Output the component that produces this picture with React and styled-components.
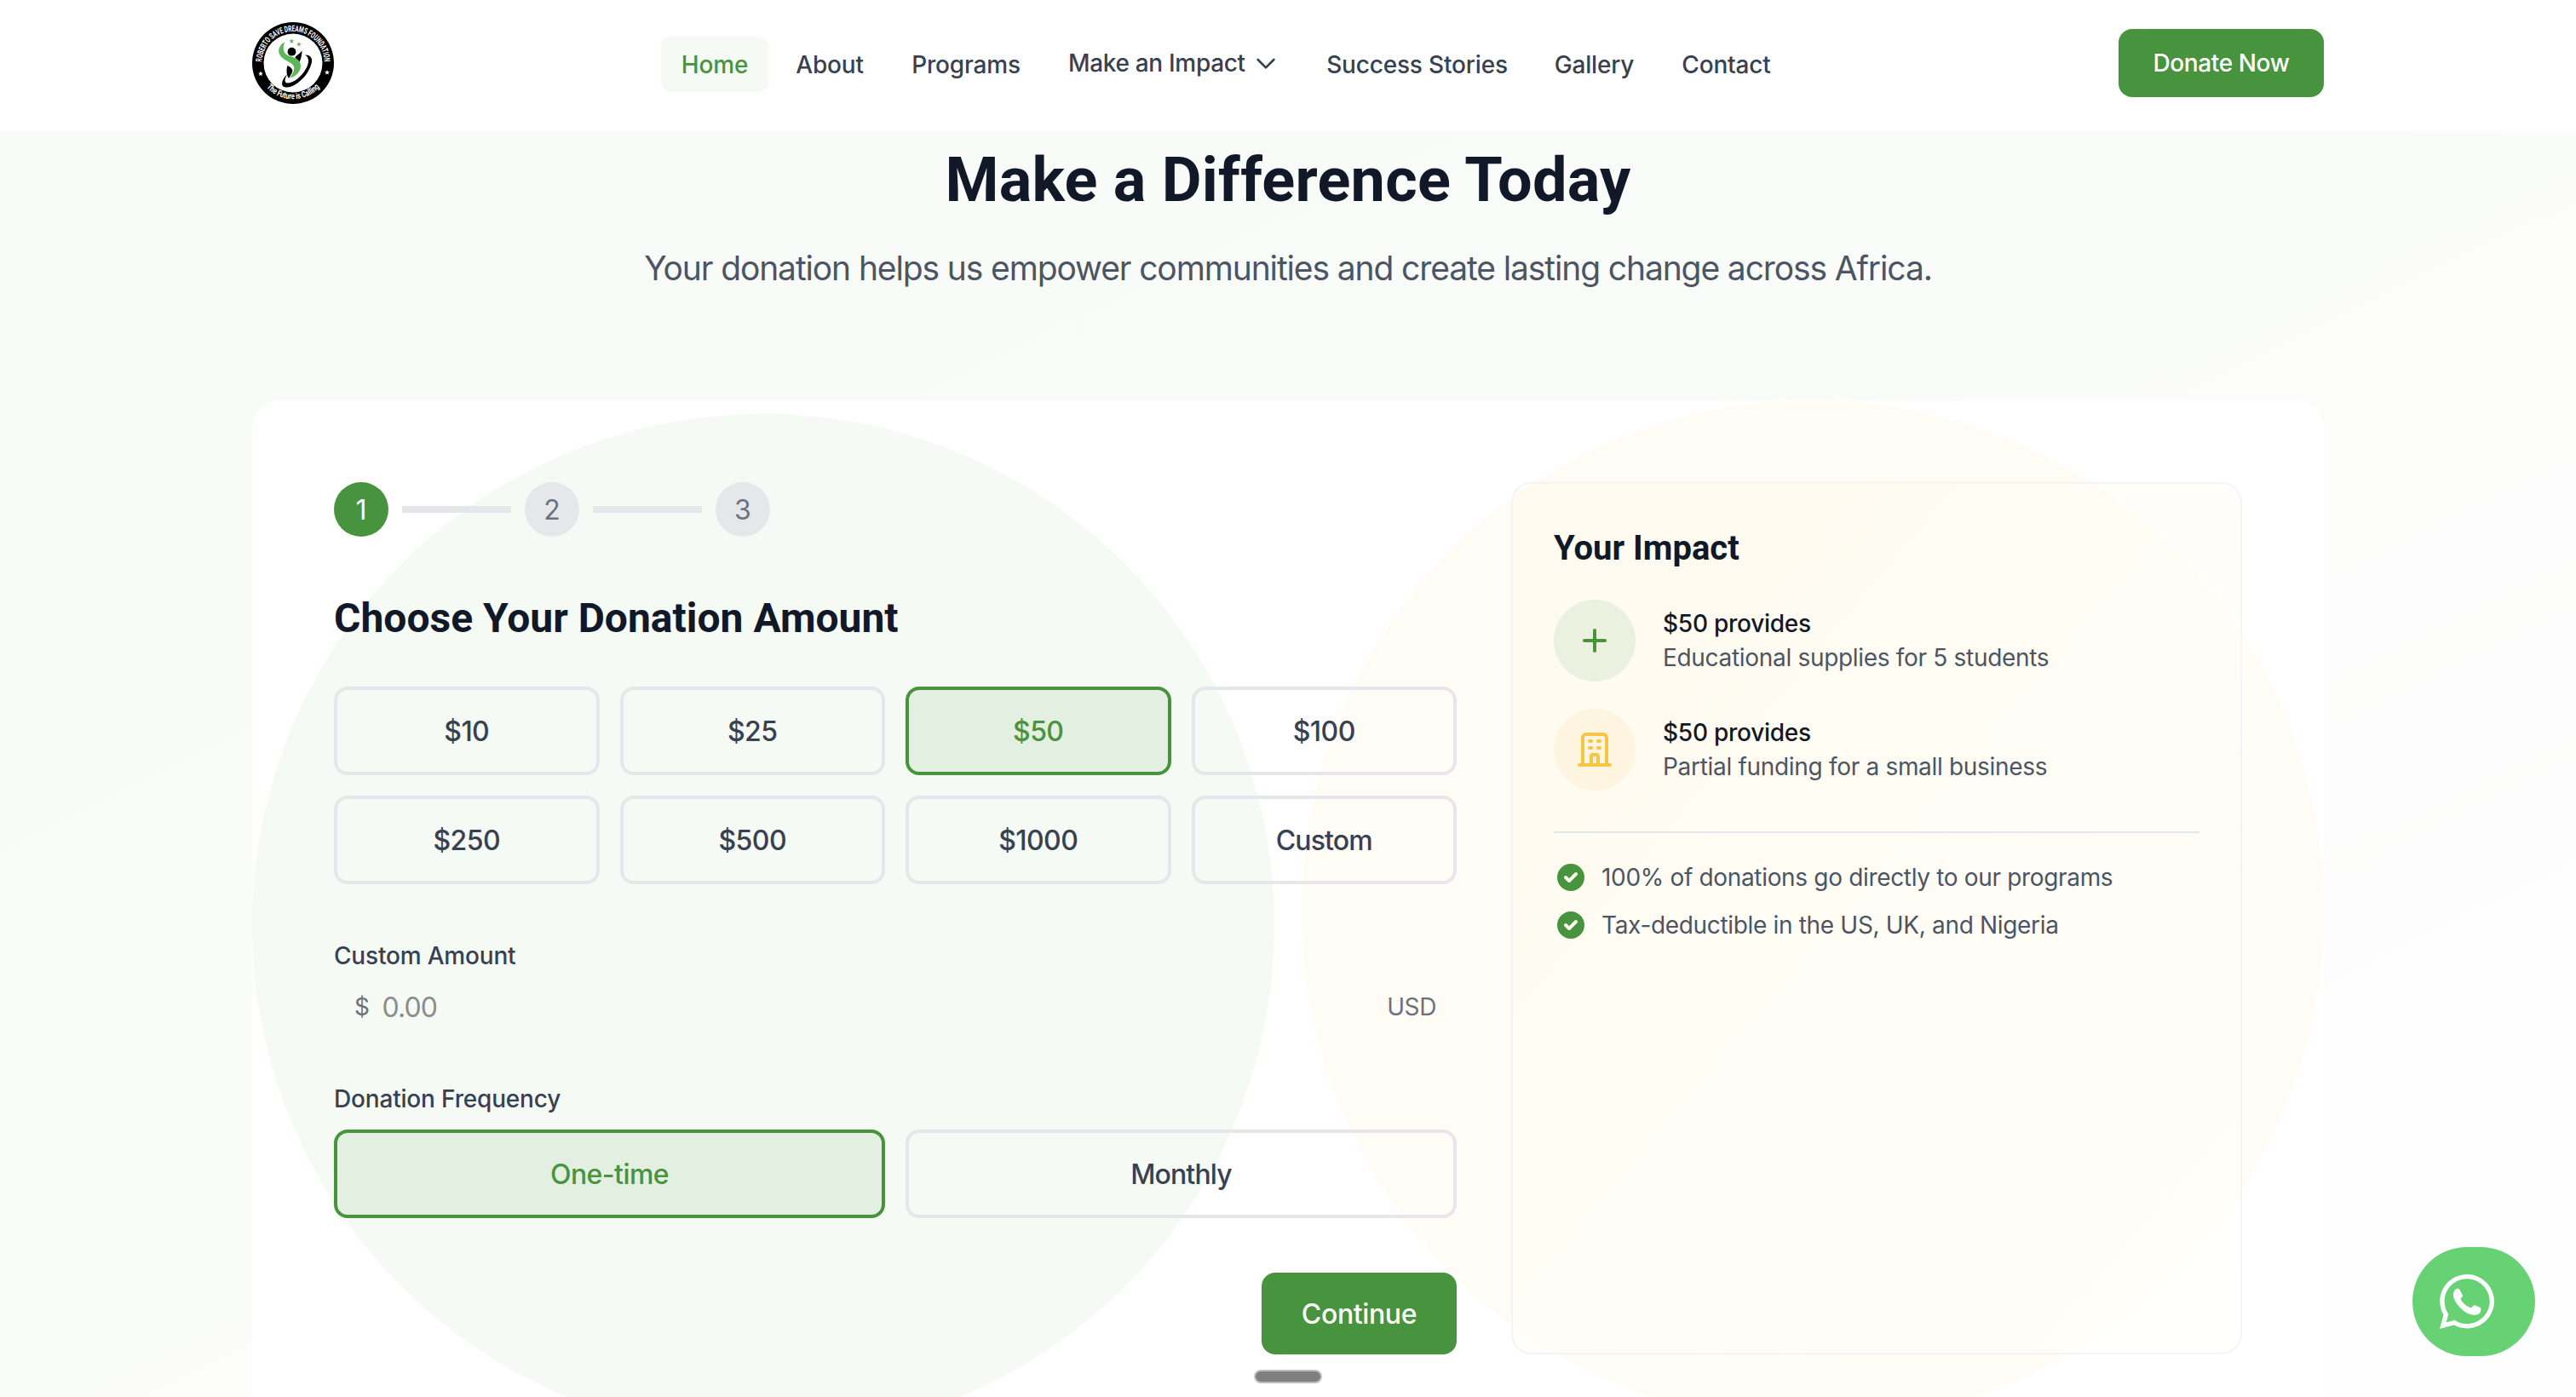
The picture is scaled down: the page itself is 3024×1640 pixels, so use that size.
import React from "react";
import styled, { createGlobalStyle } from "styled-components";

const green = "#48933d";
const ui = `Inter, "Liberation Sans", sans-serif`;
const display = `Roboto, "Liberation Sans", sans-serif`;

const GlobalStyle = createGlobalStyle`
  *, *::before, *::after { box-sizing: border-box; }
  html, body { margin: 0; padding: 0; }
  body { font-family: ${ui}; color: #374151; background: #fff; overflow: hidden; }
  h1, h2, h3, p, ul { margin: 0; padding: 0; font-weight: inherit; }
  button, input { font: inherit; color: inherit; margin: 0; }
  svg { display: block; flex: none; }
`;

const Page = styled.div`
  height: 1640px;
  overflow: hidden;
  display: flex;
  flex-direction: column;
`;

const Header = styled.header`
  height: 154px;
  flex: none;
  padding: 26px 296px 32px;
  display: flex;
  align-items: center;
  background: #fff;
`;

const Nav = styled.nav`
  display: flex;
  align-items: center;
  gap: 8px;
  margin-left: 384px;
  flex: 1;
`;

const NavLink = styled.a`
  width: ${(p) => p.$w}px;
  height: 65px;
  margin-top: ${(p) => (p.$menu ? 0 : 3)}px;
  display: flex;
  align-items: center;
  justify-content: ${(p) => (p.$menu ? "flex-start" : "center")};
  gap: 8px;
  padding: 0 ${(p) => (p.$menu ? 24 : 0)}px;
  border-radius: 12px;
  font-size: 28px;
  font-weight: 450;
  letter-spacing: ${(p) => (p.$menu ? -0.32 : -0.18)}px;
  white-space: nowrap;
  color: ${(p) => (p.$active ? green : "#374151")};
  background: ${(p) => (p.$active ? "#f5faf4" : "transparent")};
`;

const Solid = styled.button`
  width: ${(p) => p.$w}px;
  height: ${(p) => p.$h}px;
  flex: none;
  border: 0;
  padding: 0;
  border-radius: 16px;
  background: ${green};
  color: #fff;
  font-size: ${(p) => p.$size}px;
  font-weight: 500;
  letter-spacing: -0.38px;
`;

const Main = styled.main`
  flex: 1;
  min-height: 0;
  padding: 18px 296px 0;
  background: linear-gradient(to bottom right, #f7faf6, #fefefe 95%);
`;

const Title = styled.h1`
  font: 700 72px/80px ${display};
  letter-spacing: 0.25px;
  color: #111827;
  text-align: center;
`;

const Subtitle = styled.p`
  margin-top: 35px;
  font-size: 39px;
  line-height: 56px;
  letter-spacing: -1.12px;
  text-align: center;
  white-space: nowrap;
  color: #4b5563;
`;

const Card = styled.section`
  margin-top: 127px;
  height: 1216px;
  padding: 96px;
  border-radius: 32px;
  display: grid;
  grid-template-columns: 1318px 858px;
  column-gap: 64px;
  background:
    radial-gradient(circle 600px at 600px 616px, #f5faf4 599.5px, transparent 600.5px),
    radial-gradient(circle 600px at 1832px 600px, #fffcf5 599.5px, transparent 600.5px),
    #fff;
`;

const Form = styled.div`
  display: flex;
  flex-direction: column;
`;

const Steps = styled.div`
  display: flex;
  align-items: center;
  gap: 16px;
  margin-bottom: 64px;
`;

const Step = styled.span`
  width: 64px;
  height: 64px;
  border-radius: 50%;
  display: grid;
  place-items: center;
  font-size: 32px;
  background: ${(p) => (p.$active ? green : "#e5e7eb")};
  color: ${(p) => (p.$active ? "#fff" : "#6b7280")};
`;

const StepLine = styled.span`
  width: 128px;
  height: 8px;
  background: #e5e7eb;
`;

const FormTitle = styled.h2`
  font: 700 48px/64px ${display};
  color: #111827;
  margin-bottom: 48px;
`;

const Options = styled.div`
  display: grid;
  grid-template-columns: repeat(${(p) => p.$cols}, 1fr);
  gap: 24px;
  margin-bottom: 64px;
`;

const Option = styled.button`
  height: 104px;
  padding: 0;
  border: 4px solid ${(p) => (p.$active ? green : "#e5e7eb")};
  border-radius: 16px;
  background: ${(p) => (p.$active ? "rgba(72, 147, 61, 0.1)" : "transparent")};
  color: ${(p) => (p.$active ? green : "#374151")};
  font-size: 32px;
  font-weight: 450;
  letter-spacing: ${(p) => (p.$word ? -0.85 : -0.55)}px;
`;

const Label = styled.label`
  font-size: 28px;
  line-height: 40px;
  font-weight: 500;
  letter-spacing: -0.18px;
  margin-bottom: 16px;
`;

const Amount = styled.div`
  height: 48px;
  margin-bottom: 64px;
  padding: 0 24px;
  display: flex;
  align-items: center;
  font-size: 28px;
  letter-spacing: -0.4px;
  color: #6b7280;
`;

const AmountInput = styled.input`
  flex: 1;
  min-width: 0;
  height: 48px;
  padding: 0;
  margin: 0 0 0 15px;
  border: 0;
  outline: 0;
  background: transparent;
  font-size: 32px;
  letter-spacing: -0.9px;
  &::placeholder { color: #8b8d8a; opacity: 1; }
`;

const Actions = styled.div`
  display: flex;
  justify-content: flex-end;
`;

const Impact = styled.aside`
  border: 2px solid #f3f4f6;
  border-radius: 24px;
  padding: 48px;
  background: linear-gradient(to bottom right, rgba(250, 215, 100, 0.045), rgba(255, 255, 253, 0.6)) padding-box;
`;

const ImpactTitle = styled.h3`
  font: 700 40px/56px ${display};
  color: #111827;
  margin-bottom: 32px;
`;

const ImpactRow = styled.div`
  display: flex;
  align-items: center;
  gap: 32px;
  margin-bottom: ${(p) => (p.$last ? 48 : 32)}px;
`;

const Badge = styled.span`
  width: 96px;
  height: 96px;
  border-radius: 50%;
  display: grid;
  place-items: center;
  color: ${(p) => (p.$warm ? "#f7c544" : green)};
  background: ${(p) => (p.$warm ? "#fef5e1" : "#ebf0df")};
`;

const ImpactText = styled.div`
  font-size: 28px;
  line-height: 40px;
  letter-spacing: -0.31px;
  color: #4b5563;
`;

const Strong = styled.p`
  font-weight: 500;
  letter-spacing: -0.25px;
  color: #111827;
`;

const Notes = styled.ul`
  list-style: none;
  border-top: 2px solid #e5e7eb;
  padding-top: 32px;
  display: flex;
  flex-direction: column;
  gap: 16px;
`;

const Note = styled.li`
  display: flex;
  gap: 16px;
  font-size: 28px;
  line-height: 40px;
  letter-spacing: -0.33px;
  color: #4b5563;
`;

const Handle = styled.div`
  position: fixed;
  left: 1472px;
  top: 1608px;
  width: 80px;
  height: 16px;
  border: 2px solid #bfbfbf;
  border-radius: 8px;
  background: #808080;
`;

const Chat = styled.button`
  position: fixed;
  right: 48px;
  bottom: 48px;
  width: 144px;
  height: 128px;
  padding: 0 32px;
  border: 0;
  border-radius: 64px;
  background: #66d274;
  color: #fff;
`;

const star = "M0-5 1.4-1.7 4.9-1.4 2.2.8 3 4.3 0 2.4-3 4.3-2.2.8-4.9-1.4-1.4-1.7Z";

const Logo = () => (
  <svg width="96" height="96" viewBox="0 0 96 96">
    <defs>
      <path id="arcTop" d="M12.4 56 A36.6 36.6 0 1 1 83.6 56" />
      <path id="arcBottom" d="M10 66.500 A42.200 42.200 0 0 0 86 66.500" />
    </defs>
    <circle cx="48" cy="48" r="48" fill="#000" />
    <circle cx="48" cy="48" r="34.500" fill="#fff" />
    <g fill="#fff" fontFamily={display} fontWeight="700">
      <text fontSize="10" textAnchor="middle">
        <textPath href="#arcTop" startOffset="50%" textLength="113" lengthAdjust="spacingAndGlyphs">
          ROBERTO SAVE DREAMS FOUNDATION
        </textPath>
      </text>
      <text fontSize="10" textAnchor="middle">
        <textPath href="#arcBottom" startOffset="50%" textLength="70" lengthAdjust="spacingAndGlyphs">
          The Future is Calling
        </textPath>
      </text>
      <path d={star} transform="translate(10 60.500) scale(.6)" />
      <path d={star} transform="translate(88 59) scale(.6)" />
    </g>
    <path d="M62 38.500 C67 38 71 41 70 47 C68 56 62 65 54 71 C48 76 40 78 36.500 75.500 C33.500 73 35.500 66 41.500 61 C37.500 67 37.500 71.500 42 71.500 C49 71 58 64 63 55 C67 48 67.500 41.500 62 38.500Z" fill="#000" />
    <path d="M58.500 33.500 C56 37 52.500 38.500 50.500 41 L52 44.500 C53.500 45 54 46 55 47.500 C57 44.500 58.500 39 58.500 33.500Z" fill="#000" />
    <path d="M41.500 51 C40 56 40 61 43 66 L46.500 60 C48.500 57 47 53.500 41.500 51Z" fill="#000" />
    <circle cx="46.500" cy="34.700" r="4.900" fill="#000" />
    <path d="M38.500 23.500 C33 25.500 30.500 31 31.500 36 C33 42.500 41 45 46 48.500 C51 52 50 58 44 65.500 C51 64 57 58.500 57 51.500 C57 43 49 41.500 43 39.500 C36 37 35.500 29 38.500 23.500Z" fill="#5db657" />
    <path d={star} transform="translate(46.300 22.300) scale(.58)" fill="#5db657" />
    <path d={star} transform="translate(54.900 25.900) scale(.58)" fill="#5db657" />
  </svg>
);

const Check = () => (
  <svg width="40" height="40" viewBox="0 0 20 20" fill={green}>
    <path
      fillRule="evenodd"
      clipRule="evenodd"
      d="M10 18a8 8 0 100-16 8 8 0 000 16zm3.707-9.293a1 1 0 00-1.414-1.414L9 10.586 7.707 9.293a1 1 0 00-1.414 1.414l2 2a1 1 0 001.414 0l4-4z"
    />
  </svg>
);

const StrokeIcon = ({ size, d }) => (
  <svg width={size} height={size} viewBox="0 0 24 24" fill="none" stroke="currentColor" strokeWidth="2" strokeLinecap="round" strokeLinejoin="round">
    <path d={d} />
  </svg>
);

const links = [
  { name: "Home", w: 126, active: true },
  { name: "About", w: 128 },
  { name: "Programs", w: 176 },
  { name: "Make an Impact", w: 296, menu: true },
  { name: "Success Stories", w: 259 },
  { name: "Gallery", w: 141 },
  { name: "Contact", w: 153 },
];

const amounts = ["$10", "$25", "$50", "$100", "$250", "$500", "$1000", "Custom"];

export default function App() {
  return (
    <Page>
      <GlobalStyle />
      <Header>
        <Logo />
        <Nav>
          {links.map((l) => (
            <NavLink key={l.name} $w={l.w} $active={l.active} $menu={l.menu}>
              {l.name}
              {l.menu && <StrokeIcon size={32} d="M19 9l-7 7-7-7" />}
            </NavLink>
          ))}
        </Nav>
        <Solid $w={241} $h={80} $size={28}>Donate Now</Solid>
      </Header>
      <Main>
        <Title>Make a Difference Today</Title>
        <Subtitle>Your donation helps us empower communities and create lasting change across Africa.</Subtitle>
        <Card>
          <Form>
            <Steps>
              <Step $active>1</Step>
              <StepLine />
              <Step>2</Step>
              <StepLine />
              <Step>3</Step>
            </Steps>
            <FormTitle>Choose Your Donation Amount</FormTitle>
            <Options $cols={4}>
              {amounts.map((a) => (
                <Option key={a} $active={a === "$50"} $word={a === "Custom"}>{a}</Option>
              ))}
            </Options>
            <Label>Custom Amount</Label>
            <Amount>
              $
              <AmountInput placeholder="0.00" />
              USD
            </Amount>
            <Label>Donation Frequency</Label>
            <Options $cols={2}>
              <Option $active>One-time</Option>
              <Option $word>Monthly</Option>
            </Options>
            <Actions>
              <Solid $w={229} $h={96} $size={32}>Continue</Solid>
            </Actions>
          </Form>
          <Impact>
            <ImpactTitle>Your Impact</ImpactTitle>
            <ImpactRow>
              <Badge><StrokeIcon size={48} d="M12 6v12M6 12h12" /></Badge>
              <ImpactText>
                <Strong>$50 provides</Strong>
                <p>Educational supplies for 5 students</p>
              </ImpactText>
            </ImpactRow>
            <ImpactRow $last>
              <Badge $warm>
                <StrokeIcon size={48} d="M19 21V5a2 2 0 00-2-2H7a2 2 0 00-2 2v16m14 0h2m-2 0h-5m-9 0H3m2 0h5M9 7h1m-1 4h1m4-4h1m-1 4h1m-5 10v-5a1 1 0 011-1h2a1 1 0 011 1v5m-4 0h4" />
              </Badge>
              <ImpactText>
                <Strong>$50 provides</Strong>
                <p>Partial funding for a small business</p>
              </ImpactText>
            </ImpactRow>
            <Notes>
              <Note><Check />100% of donations go directly to our programs</Note>
              <Note><Check />Tax-deductible in the US, UK, and Nigeria</Note>
            </Notes>
          </Impact>
        </Card>
      </Main>
      <Handle />
      <Chat>
        <svg width="64" height="64" viewBox="32 32 448 448" fill="currentColor">
          <path transform="translate(32 0)" d="M380.900 97.100C339 55.100 283.200 32 223.900 32c-122.400 0-222 99.600-222 222 0 39.100 10.200 77.300 29.600 111L0 480l117.700-30.900c32.400 17.700 68.900 27 106.100 27h.1c122.300 0 224.100-99.600 224.100-222 0-59.300-25.200-115-67.100-157zm-157 341.600c-33.200 0-65.700-8.900-94-25.700l-6.700-4-69.800 18.300L72 359.200l-4.400-7c-18.500-29.400-28.200-63.300-28.200-98.200 0-101.700 82.800-184.500 184.600-184.500 49.300 0 95.600 19.200 130.400 54.100 34.800 34.900 56.200 81.200 56.100 130.500 0 101.800-84.900 184.600-186.600 184.600z" />
          <path d="M170 151C180 148 192 149 196 158L221 206C224 214 214 222 202 232C215 262 250 295 289 308C300 298 308 284 322 285L366 305C376 312 372 350 350 360C320 374 280 366 240 340C195 308 160 262 146 222C140 190 150 160 170 151Z" />
        </svg>
      </Chat>
    </Page>
  );
}
